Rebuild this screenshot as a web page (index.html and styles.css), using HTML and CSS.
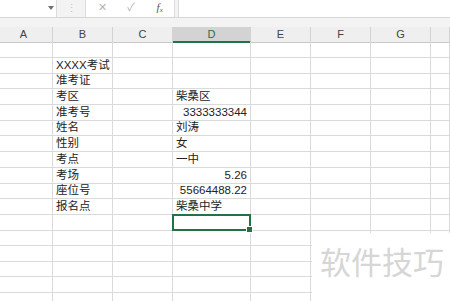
FILE: index.html
```html
<!DOCTYPE html>
<html lang="zh-CN">
<head>
    <meta charset="UTF-8">
    <title>准考证</title>
    <link rel="stylesheet" href="styles.css">
</head>
<body>
    <div class="toolbar">
        <div class="namebox"><span class="arrow"></span></div>
        <div class="grip">⋮</div>
        <div class="fx-buttons">
            <span class="btn">✕</span>
            <span class="btn">✓</span>
            <span class="btn fx">f<sub>x</sub></span>
        </div>
        <div class="formula"></div>
    </div>
    <div class="band"></div>

    <div class="sheet">
        <div class="row head">
            <div class="cell first">A</div>
            <div class="cell">B</div>
            <div class="cell">C</div>
            <div class="cell active">D</div>
            <div class="cell">E</div>
            <div class="cell">F</div>
            <div class="cell">G</div>
            <div class="cell"></div>
        </div>
        <div id="rows"></div>
        <div class="watermark">软件技巧</div>
    </div>

    <script>
        // 工作表数据：B 列和 D 列
        var data = [
            ['', '', null],
            ['XXXX考试', '', null],
            ['准考证', '', null],
            ['考区', '柴桑区', 'left'],
            ['准考号', '3333333344', 'right'],
            ['姓名', '刘涛', 'left'],
            ['性别', '女', 'left'],
            ['考点', '一中', 'left'],
            ['考场', '5.26', 'right'],
            ['座位号', '55664488.22', 'right'],
            ['报名点', '柴桑中学', 'left'],
            ['', '', 'selected'],
            ['', '', null],
            ['', '', null],
            ['', '', null],
            ['', '', null],
            ['', '', null]
        ];
        var rows = document.getElementById('rows');
        data.forEach(function (r) {
            var row = document.createElement('div');
            row.className = 'row';
            var dClass = 'cell';
            if (r[2] === 'right') dClass += ' num';
            if (r[2] === 'selected') dClass += ' selected';
            row.innerHTML =
                '<div class="cell"></div>' +
                '<div class="cell">' + r[0] + '</div>' +
                '<div class="cell"></div>' +
                '<div class="' + dClass + '">' + r[1] + (r[2] === 'selected' ? '<span class="handle"></span>' : '') + '</div>' +
                '<div class="cell"></div>' +
                '<div class="cell"></div>' +
                '<div class="cell"></div>' +
                '<div class="cell"></div>';
            rows.appendChild(row);
        });
    </script>
</body>
</html>
```

FILE: styles.css
```css
body {
    margin: 0;
    width: 450px;
    height: 301px;
    overflow: hidden;
    background: #fff;
    font-family: "Liberation Sans", "Noto Sans CJK SC", sans-serif;
}
.toolbar {
    display: flex;
    height: 17px;
    background: #f3f3f3;
    border-bottom: 1px solid #d6d6d6;
}
.namebox {
    position: relative;
    width: 57px;
    background: #fff;
    border-right: 1px solid #dcdcdc;
    box-sizing: border-box;
}
.arrow {
    position: absolute;
    left: 48px;
    top: 6px;
    border-left: 3px solid transparent;
    border-right: 3px solid transparent;
    border-top: 4px solid #707070;
}
.grip {
    width: 28px;
    text-align: center;
    color: #c4c4c4;
    font-size: 11px;
    line-height: 17px;
}
.fx-buttons {
    display: flex;
    width: 90px;
    background: #fff;
    border-left: 1px solid #dcdcdc;
    border-right: 1px solid #dcdcdc;
    box-sizing: border-box;
}
.btn {
    width: 29px;
    text-align: center;
    color: #b4b4b4;
    font-size: 11px;
    line-height: 15px;
}
.btn:first-child {
    margin-left: 2px;
}
.fx {
    font-family: "Liberation Serif", serif;
    font-style: italic;
    font-size: 11px;
    color: #555;
}
.fx sub {
    font-size: 7px;
    vertical-align: -1px;
}
.formula {
    flex: 1;
    margin-left: 3px;
    background: #fff;
    border-left: 1px solid #dcdcdc;
}
.band {
    height: 9px;
    background: #f3f3f3;
}
.sheet {
    position: relative;
    overflow: hidden;
}
.row {
    display: grid;
    grid-template-columns: 53px 60px 60px 78px 60px 60px 60px 19px;
    height: 15.7px;
}
.cell {
    position: relative;
    box-sizing: border-box;
    border-right: 1px solid #dadada;
    border-bottom: 1px solid #dadada;
    padding: 0 3px;
    font-size: 11.5px;
    line-height: 15px;
    color: #222;
    white-space: nowrap;
}
.cell.num {
    text-align: right;
}
.head {
    height: 15px;
    background: #efefef;
}
.head .cell {
    text-align: center;
    font-size: 11px;
    line-height: 14px;
    color: #444;
    border-right-color: #d3d3d3;
    border-bottom-color: #c8c8c8;
}
.head .first {
    padding-right: 8px;
}
.head .active {
    background: #d3d3d3;
    color: #2b6e48;
    border-bottom: 2px solid #217346;
}
.selected {
    border: 2px solid #217346;
    margin: -1px 0 0 -1px;
    width: 79px;
    height: 17px;
    z-index: 1;
}
.handle {
    position: absolute;
    right: -4px;
    bottom: -4px;
    width: 5px;
    height: 5px;
    background: #217346;
    border: 1px solid #fff;
}
.watermark {
    position: absolute;
    left: 312px;
    top: 206px;
    width: 138px;
    height: 95px;
    background: #fff;
    color: #d6d6d6;
    font-family: "Noto Sans CJK SC", sans-serif;
    font-size: 31px;
    line-height: 40px;
    padding: 8px 0 0 8px;
    box-sizing: border-box;
    z-index: 2;
}
```
